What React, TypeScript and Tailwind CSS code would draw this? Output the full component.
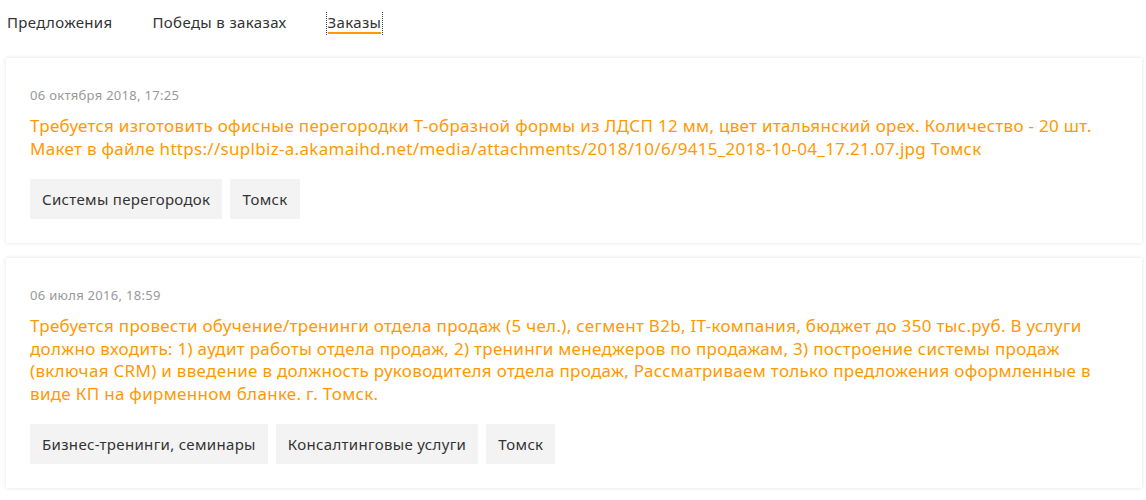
type Order = {
  date: string;
  text: string;
  tags: string[];
};

const orders: Order[] = [
  {
    date: "06 октября 2018, 17:25",
    text: "Требуется изготовить офисные перегородки Т-образной формы из ЛДСП 12 мм, цвет итальянский орех. Количество - 20 шт. Макет в файле https://suplbiz-a.akamaihd.net/media/attachments/2018/10/6/9415_2018-10-04_17.21.07.jpg Томск",
    tags: ["Системы перегородок", "Томск"],
  },
  {
    date: "06 июля 2016, 18:59",
    text: "Требуется провести обучение/тренинги отдела продаж (5 чел.), сегмент B2b, IT-компания, бюджет до 350 тыс.руб. В услуги должно входить: 1) аудит работы отдела продаж, 2) тренинги менеджеров по продажам, 3) построение системы продаж (включая CRM) и введение в должность руководителя отдела продаж, Рассматриваем только предложения оформленные в виде КП на фирменном бланке. г. Томск.",
    tags: ["Бизнес-тренинги, семинары", "Консалтинговые услуги", "Томск"],
  },
];

const tabs = ["Предложения", "Победы в заказах", "Заказы"];

const OrderCard = ({ order }: { order: Order }) => {
  return (
    <div className="bg-white shadow-[0_0_4px_rgba(0,0,0,0.12)] px-[24px] pt-[27px] pb-[24px]">
      <div className="text-[13px] leading-[20px] text-[#999]">{order.date}</div>
      <div className="mt-[10px] text-[17px] leading-[22.5px] text-[#ff9900] break-words">{order.text}</div>
      <div className="mt-[19px] flex flex-wrap gap-[8px]">
        {order.tags.map((tag) => (
          <span key={tag} className="h-[40px] flex items-center px-[12px] bg-[#f3f3f3] text-[15px] tracking-[0.33px] text-[#333]">
            {tag}
          </span>
        ))}
      </div>
    </div>
  );
};

export default function App() {
  return (
    <div className="min-h-[500px] bg-white font-['Noto_Sans',sans-serif] tracking-[0.3px]">
      <div className="flex items-start pl-[7px] pt-[12px] gap-[40px]">
        {tabs.map((tab, i) =>
          i === tabs.length - 1 ? (
            <button key={tab} type="button" className="-ml-[1px] px-[1px] pb-[1px] border-x border-dotted border-[#444]">
              <span className="block text-[15px] leading-[20px] tracking-[0.35px] text-[#333] border-b-2 border-[#ff9900]">{tab}</span>
            </button>
          ) : (
            <button key={tab} type="button" className="text-[15px] leading-[20px] tracking-[0.35px] text-[#333] border-b-2 border-transparent">
              {tab}
            </button>
          )
        )}
      </div>
      <div className="ml-[6px] mr-[4px] mt-[23px] flex flex-col gap-[15px] pb-[10px]">
        {orders.map((order) => (
          <OrderCard key={order.date} order={order} />
        ))}
      </div>
    </div>
  );
}
